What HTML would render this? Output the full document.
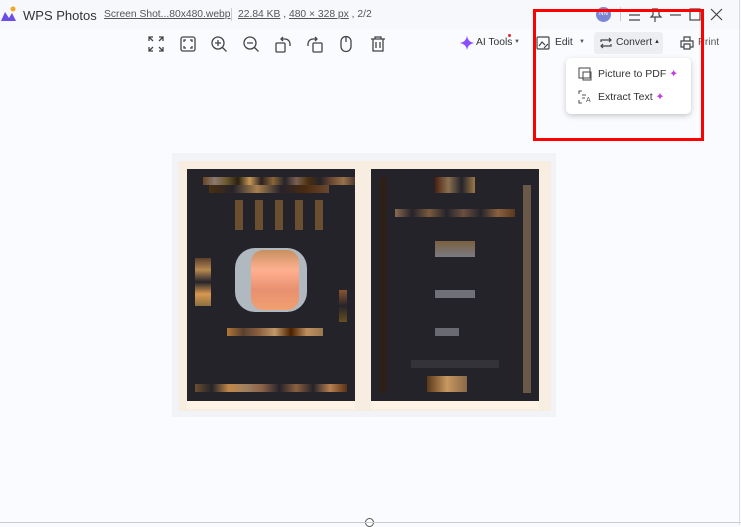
<!DOCTYPE html>
<html><head><meta charset="utf-8"><style>
*{margin:0;padding:0;box-sizing:border-box}
body{width:741px;height:525px;overflow:hidden;background:#fafbfe;font-family:"Liberation Sans",sans-serif;position:relative;color:#333}
.title{position:absolute;left:0;top:0;width:741px;height:29px;background:#f7f8fb}
.abs{position:absolute}
.t{font-size:12px;white-space:nowrap}
.u{text-decoration:underline;color:#555}
.ic{position:absolute;top:35px;width:18px;height:18px}
.blk{position:absolute}
</style></head><body>
<div class="title"></div>
<svg class="abs" style="left:0;top:6px" width="20" height="16"><circle cx="13" cy="3" r="2.5" fill="#f5a623"/><path d="M1 15 L5 6 L9 12 L12 7 L16 15Z" fill="#6b4de6"/></svg>
<div class="abs t" style="left:23px;top:8px;font-size:13px;color:#333">WPS Photos</div>
<div class="abs t u" style="left:104px;top:9px;font-size:10.3px">Screen Shot...80x480.webp</div>
<div class="abs" style="left:231px;top:8px;width:1px;height:13px;background:#ccc"></div>
<div class="abs t" style="left:238px;top:9px;font-size:10.3px;color:#555"><span class="u">22.84 KB</span> , <span class="u">480 × 328 px</span> , 2/2</div>
<div class="abs" style="left:596px;top:7px;width:15px;height:15px;border-radius:50%;background:#7b86d6;color:#fff;font-size:6px;text-align:center;line-height:15px">NN</div>
<div class="abs" style="left:620px;top:7px;width:1px;height:14px;background:#ccc"></div>
<svg class="abs" style="left:628px;top:8px" width="100" height="14" fill="none" stroke="#444" stroke-width="1.2"><path d="M1 2h11M1 7h11M1 12h11"/><path d="M24 1h6M25 1v6l-2 2h10l-2-2V1M27 9v5"/><path d="M42 7h11"/><rect x="62" y="1" width="10" height="11"/><path d="M83 1l11 11M94 1L83 12"/></svg>
<svg class="ic" style="left:147px" viewBox="0 0 18 18" fill="none" stroke="#444" stroke-width="1.3"><path d="M2 6V2h4M12 2h4v4M16 12v4h-4M6 16H2v-4M2 2l4 4M16 2l-4 4M16 16l-4-4M2 16l4-4"/></svg>
<svg class="ic" style="left:179px" viewBox="0 0 18 18" fill="none" stroke="#444" stroke-width="1.3"><rect x="2" y="2" width="14" height="14" rx="2"/><path d="M5 7V5h2M11 5h2v2M13 11v2h-2M7 13H5v-2"/></svg>
<svg class="ic" style="left:210px" viewBox="0 0 18 18" fill="none" stroke="#444" stroke-width="1.3"><circle cx="8" cy="8" r="6"/><path d="M12.5 12.5l4 4M5 8h6M8 5v6"/></svg>
<svg class="ic" style="left:242px" viewBox="0 0 18 18" fill="none" stroke="#444" stroke-width="1.3"><circle cx="8" cy="8" r="6"/><path d="M12.5 12.5l4 4M5 8h6"/></svg>
<svg class="ic" style="left:274px" viewBox="0 0 18 18" fill="none" stroke="#444" stroke-width="1.3"><rect x="2" y="8" width="9" height="9" rx="1"/><path d="M7 4h4a5 5 0 0 1 5 5v2M9 2L7 4l2 2"/></svg>
<svg class="ic" style="left:306px" viewBox="0 0 18 18" fill="none" stroke="#444" stroke-width="1.3"><rect x="7" y="8" width="9" height="9" rx="1"/><path d="M11 4H7a5 5 0 0 0-5 5v2M9 2l2 2-2 2"/></svg>
<svg class="ic" style="left:337px" viewBox="0 0 18 18" fill="none" stroke="#444" stroke-width="1.3"><rect x="4" y="1.5" width="10" height="15" rx="5"/><path d="M9 2v5"/></svg>
<svg class="ic" style="left:369px" viewBox="0 0 18 18" fill="none" stroke="#444" stroke-width="1.3"><path d="M2 4h14M6 4V2h6v2M4 4v12h10V4M7 7v6M11 7v6"/></svg>
<svg class="abs" style="left:460px;top:36px" width="14" height="14"><path d="M7 0Q8 6 14 7Q8 8 7 14Q6 8 0 7Q6 6 7 0Z" fill="#8a4dff"/></svg>
<div class="abs t" style="left:476px;top:37px;font-size:10.3px">AI Tools</div>
<div class="abs" style="left:508px;top:34px;width:3px;height:3px;border-radius:50%;background:#e22"></div>
<div class="abs t" style="left:514px;top:39px;font-size:6px;color:#555">▼</div>
<svg class="abs" style="left:536px;top:36px" width="14" height="14" fill="none" stroke="#444" stroke-width="1.2"><rect x="1" y="1" width="12" height="12" rx="1"/><path d="M3 10l3-4 3 3M8 12l4-4"/></svg>
<div class="abs t" style="left:555px;top:37px;font-size:10.3px">Edit</div>
<div class="abs t" style="left:579px;top:39px;font-size:6px;color:#555">▼</div>
<div class="abs" style="left:594px;top:32px;width:69px;height:22px;background:#eceef2;border-radius:3px"></div>
<svg class="abs" style="left:599px;top:36px" width="14" height="14" fill="none" stroke="#444" stroke-width="1.2"><path d="M2 6V4h10M10 2l2 2-2 2M12 8v2H2M4 12l-2-2 2-2"/></svg>
<div class="abs t" style="left:616px;top:37px;font-size:10.3px">Convert</div>
<div class="abs t" style="left:654px;top:39px;font-size:6px">▲</div>
<svg class="abs" style="left:680px;top:36px" width="14" height="14" fill="none" stroke="#444" stroke-width="1.2"><path d="M4 5V1h6v4M4 11H1V5h12v6h-3M4 8h6v5H4z"/></svg>
<div class="abs t" style="left:698px;top:37px;font-size:10.3px;color:#555">Print</div>
<div class="abs" style="left:566px;top:58px;width:125px;height:56px;background:#fff;border-radius:5px;box-shadow:0 2px 6px rgba(0,0,0,.2)"></div>
<svg class="abs" style="left:578px;top:67px" width="14" height="14" fill="none" stroke="#555" stroke-width="1.1"><rect x="1" y="1" width="11" height="10"/><rect x="5" y="5" width="8" height="8"/></svg>
<div class="abs t" style="left:598px;top:68px;font-size:10.5px">Picture to PDF <span style="color:#c03ce0">✦</span></div>
<svg class="abs" style="left:578px;top:90px" width="14" height="14" fill="none" stroke="#555" stroke-width="1.1"><path d="M1 4V1h3M1 10v3h3M4 5h4M4 8h3"/><text x="8" y="12" font-size="7" fill="#555" stroke="none">A</text></svg>
<div class="abs t" style="left:598px;top:91px;font-size:10.5px">Extract Text <span style="color:#c03ce0">✦</span></div>
<div class="abs" style="left:533px;top:9px;width:171px;height:132px;border:3px solid #f00"></div>
<div class="abs" style="left:172px;top:153px;width:384px;height:264px;background:#f1f3f7"></div>
<div class="abs" style="left:179px;top:161px;width:372px;height:250px;background:#f7ede1"></div>
<div class="abs" style="left:187px;top:169px;width:168px;height:232px;background:#25232a"></div>
<div class="abs" style="left:371px;top:169px;width:168px;height:232px;background:#25232a"></div>
<div class="abs" style="left:187px;top:401px;width:168px;height:8px;background:#fdf3e6"></div>
<div class="abs" style="left:371px;top:401px;width:168px;height:8px;background:#fdf3e6"></div>
<div class="blk" style="left:203px;top:177px;width:152px;height:8px;background:linear-gradient(90deg,#6a4524,#8a7a70,#6e5830,#2a2010,#c79858,#2a2020,#8a6538,#25232a,#7a6050,#4a3010,#25232a,#6a4830,#9a7048,#4a3a30)"></div>
<div class="blk" style="left:209px;top:185px;width:120px;height:8px;background:linear-gradient(90deg,#4a3010,#25232a,#a88050,#25232a,#4a2a10,#6a4830)"></div>
<div class="blk" style="left:235px;top:200px;width:100px;height:30px;background:repeating-linear-gradient(90deg,#6a5030 0 8px,#25232a 8px 20px)"></div>
<div class="blk" style="left:235px;top:248px;width:72px;height:64px;background:#b0b8c0;border-radius:20px"></div>
<div class="blk" style="left:251px;top:250px;width:48px;height:60px;background:linear-gradient(#c89060,#ffb090,#e89070,#f0a070);border-radius:12px"></div>
<div class="blk" style="left:195px;top:258px;width:16px;height:48px;background:linear-gradient(#5a4030,#b88850,#25232a,#d89850,#8a7040)"></div>
<div class="blk" style="left:339px;top:290px;width:8px;height:32px;background:linear-gradient(#8a5530,#25232a,#6a5020)"></div>
<div class="blk" style="left:227px;top:328px;width:96px;height:8px;background:linear-gradient(90deg,#b07838,#5a4030,#8a6040,#c09868,#4a2000,#c09060,#9a7850)"></div>
<div class="blk" style="left:195px;top:384px;width:152px;height:8px;background:linear-gradient(90deg,#6a5030,#25232a,#c08848,#a08060,#8a6048,#25232a,#8a6040,#25232a,#b88050,#5a3018)"></div>
<div class="blk" style="left:379px;top:177px;width:8px;height:216px;background:#2c2018"></div>
<div class="blk" style="left:523px;top:185px;width:8px;height:208px;background:#6a5848"></div>
<div class="blk" style="left:395px;top:209px;width:120px;height:8px;background:linear-gradient(90deg,#8a6a50,#25232a,#7a5a40,#25232a,#6a5040,#25232a,#8a6040,#5a3820)"></div>
<div class="blk" style="left:435px;top:177px;width:40px;height:16px;background:linear-gradient(90deg,#4a2010,#8a7050,#25232a,#9a7848)"></div>
<div class="blk" style="left:435px;top:241px;width:40px;height:16px;background:linear-gradient(#7a6040,#7a7a82)"></div>
<div class="blk" style="left:435px;top:290px;width:40px;height:8px;background:#707078"></div>
<div class="blk" style="left:435px;top:328px;width:24px;height:8px;background:#6a6a72"></div>
<div class="blk" style="left:411px;top:360px;width:88px;height:8px;background:#35333a"></div>
<div class="blk" style="left:427px;top:376px;width:40px;height:16px;background:linear-gradient(90deg,#5a3818,#c89860,#8a6848)"></div>
<div class="abs" style="left:365px;top:518px;width:9px;height:9px;border:1.5px solid #555;border-radius:50%;background:#fff"></div>
<div class="abs" style="left:0;top:522px;width:741px;height:1px;background:#ccc"></div>
<div class="abs" style="left:739px;top:0;width:1px;height:525px;background:#ddd"></div>
</body></html>
